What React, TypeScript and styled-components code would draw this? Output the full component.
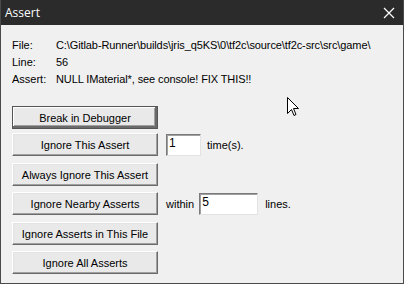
import React from 'react';
import styled, { createGlobalStyle } from 'styled-components';

const GlobalStyle = createGlobalStyle`
  html, body {
    margin: 0;
    padding: 0;
    background: #f0f0f0;
  }
  body {
    font-family: "Liberation Sans", Arial, sans-serif;
  }
`;

const Window = styled.div`
  width: 404px;
  height: 284px;
  box-sizing: border-box;
  background: #f0f0f0;
  border: 1px solid #4a4a4a;
  border-top: none;
  display: flex;
  flex-direction: column;
  position: relative;
  overflow: hidden;
`;

const TitleBar = styled.div`
  height: 25px;
  margin: 0 -1px;
  background: #2b2b2b;
  display: flex;
  align-items: center;
  justify-content: space-between;
  padding: 0 9px 0 5px;
  color: #ffffff;
  font-family: "Open Sans", "Noto Sans", sans-serif;
  font-size: 12px;
`;

const Content = styled.div`
  padding: 11px 0 0 11px;
  font-size: 11px;
  color: #000;
  display: flex;
  flex-direction: column;
`;

const InfoGrid = styled.div`
  display: grid;
  grid-template-columns: 44px auto;
  grid-auto-rows: 17px;
  align-items: center;
  white-space: nowrap;
`;

const Label = styled.span``;

const Value = styled.span`
  letter-spacing: -0.1px;
`;

const Actions = styled.div`
  display: flex;
  flex-direction: column;
  margin-top: 19px;
`;

const Row = styled.div<{ $gap: number }>`
  display: flex;
  align-items: center;
  margin-top: ${p => p.$gap}px;
`;

const Button = styled.button<{ $default?: boolean }>`
  width: 146px;
  height: 23px;
  box-sizing: border-box;
  margin: 0;
  padding: 0;
  font-family: "Liberation Sans", Arial, sans-serif;
  font-size: 11px;
  color: #000;
  background: #e9e9e9;
  border: 1px solid;
  border-color: #ffffff #6a6a6a #6a6a6a #ffffff;
  box-shadow: inset -1px -1px 0 #a0a0a0, inset 1px 1px 0 #e3e3e3;
  ${p => p.$default && `
    border: 1px solid #555;
    box-shadow: inset -2px -2px 0 #6a6a6a, inset 1px 1px 0 #fff, inset -3px -3px 0 #a0a0a0;
  `}
`;

const Field = styled.input<{ $width: number }>`
  width: ${p => p.$width}px;
  height: 22px;
  box-sizing: border-box;
  margin: 0;
  padding: 1px 2px 4px;
  font-family: "Liberation Sans", Arial, sans-serif;
  font-size: 12px;
  background: #fff;
  border: 1px solid;
  border-color: #7a7a7a #e3e3e3 #e3e3e3 #7a7a7a;
  box-shadow: inset 1px 1px 0 #a0a0a0;
  outline: none;
`;

const Note = styled.span<{ $left: number; $right?: number }>`
  margin-left: ${p => p.$left}px;
  margin-right: ${p => p.$right ?? 0}px;
`;

const Cursor = styled.svg`
  position: absolute;
  left: 286px;
  top: 97px;
`;

export default function App() {
  return (
    <>
      <GlobalStyle />
      <Window>
        <TitleBar>
          <span>Assert</span>
          <svg width="12" height="12" viewBox="0 0 12 12">
            <path d="M1 1 L11 11 M11 1 L1 11" stroke="#fff" strokeWidth="1.2" />
          </svg>
        </TitleBar>
        <Content>
          <InfoGrid>
            <Label>File:</Label>
            <Value>C:\Gitlab-Runner\builds\jris_q5KS\0\tf2c\source\tf2c-src\src\game\</Value>
            <Label>Line:</Label>
            <Value>56</Value>
            <Label>Assert:</Label>
            <Value>NULL IMaterial*, see console! FIX THIS!!</Value>
          </InfoGrid>
          <Actions>
            <Row $gap={0}>
              <Button $default>Break in Debugger</Button>
            </Row>
            <Row $gap={4}>
              <Button>Ignore This Assert</Button>
              <Note $left={8} />
              <Field $width={35} defaultValue="1" />
              <Note $left={6}>time(s).</Note>
            </Row>
            <Row $gap={7}>
              <Button>Always Ignore This Assert</Button>
            </Row>
            <Row $gap={6}>
              <Button>Ignore Nearby Asserts</Button>
              <Note $left={8} $right={5}>within</Note>
              <Field $width={59} defaultValue="5" />
              <Note $left={7}>lines.</Note>
            </Row>
            <Row $gap={7}>
              <Button>Ignore Asserts in This File</Button>
            </Row>
            <Row $gap={6}>
              <Button>Ignore All Asserts</Button>
            </Row>
          </Actions>
        </Content>
        <Cursor width="12" height="20" viewBox="0 0 12 20">
          <path d="M0.5 0.5 L0.5 16.5 L4.5 12.5 L7 18.5 L9 17.5 L6.5 11.5 L11.5 11.5 Z" fill="#fff" stroke="#000" strokeWidth="1" />
        </Cursor>
      </Window>
    </>
  );
}
